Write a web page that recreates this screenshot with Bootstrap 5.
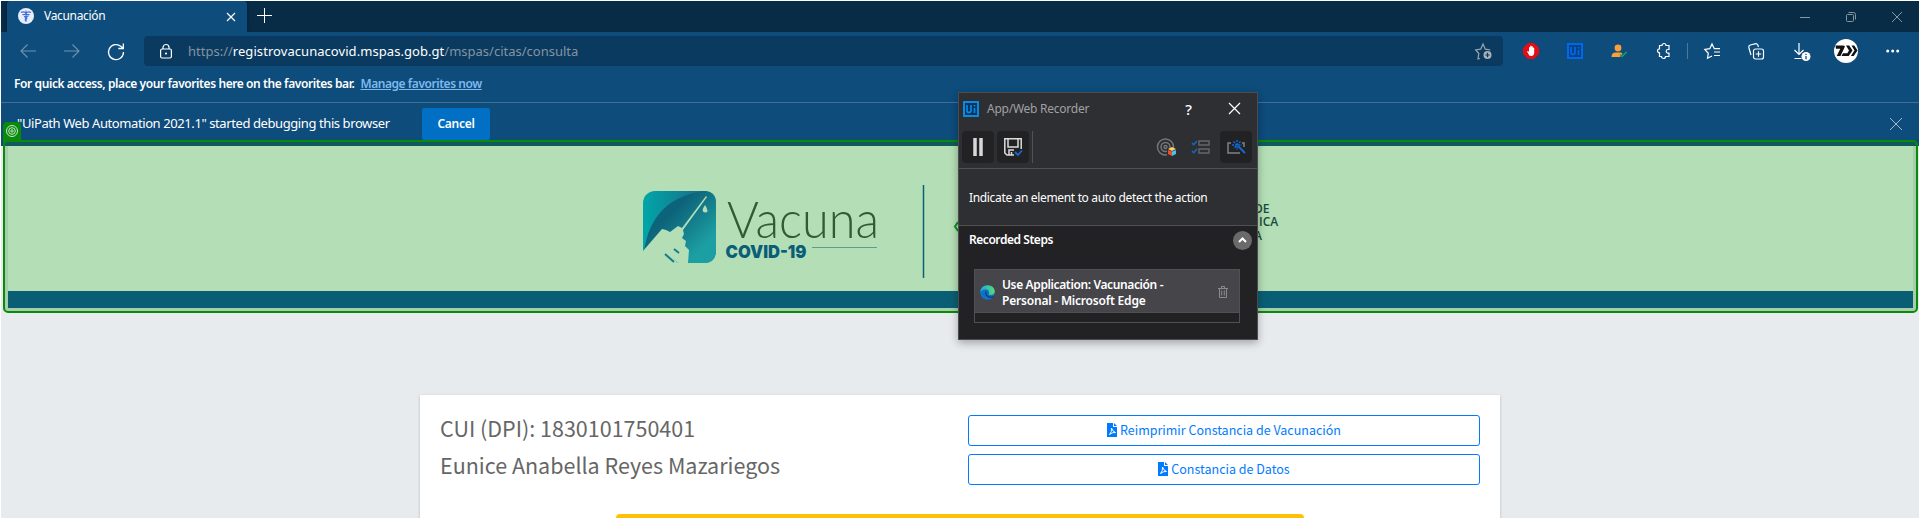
<!DOCTYPE html>
<html lang="es">
<head>
<meta charset="utf-8">
<title>Vacunación</title>
<link href="https://cdn.jsdelivr.net/npm/bootstrap@5.3.0/dist/css/bootstrap.min.css" rel="stylesheet">
<style>
body{width:1920px;height:518px;overflow:hidden;background:#fff;font-family:"Noto Sans",sans-serif;font-size:12px;line-height:16px;color:#fff}
svg{display:block;flex:none;overflow:visible}
.browser{width:1918px;height:517px;margin:1px 0 0 1px;background:#e8ebee}
.browser>*{flex-shrink:0}
.titlebar{height:31px;background:#082b46;padding-left:6px}
.tab{width:240px;height:31px;background:#0e4c7c;border-radius:3px 3px 0 0;padding:0 12px 2px 11px;box-shadow:0 0 3px #041c30}
.toolbar{height:38px;background:#0e4c7c;position:relative}
.address{width:1359px;height:30px;background:#0a3a60;border-radius:4px;font-size:13px}
.dim{color:#8494a0}
.favs{height:32px;background:#0e4c7c;padding:0 0 4px 13px;font-weight:600}
.favs a{color:#7db9ee;margin-left:6px}
.infobar{height:44px;background:#0e4c7c;border-top:1px solid #40709a;padding:5px 17px 0 16px}
.cancel{width:68px;height:32px;background:#006fc4;border:0;border-radius:2px;color:#fff;font-size:12px;font-weight:600;padding:0;line-height:30px}
.banner{height:162px;margin:0 6px 0 7px;background:#b4deb5;border-bottom:17px solid #0a5e73}
.ministry{font:600 12px/13.3px "Open Sans",sans-serif;color:#174d3e;padding-top:56px}
.record-card{width:1080px;height:130px;margin:87px auto 0;background:#fff;box-shadow:0 1px 3px rgba(0,0,0,.2);font-family:"Noto Sans CJK SC",sans-serif;color:#666;padding:20px 20px 0}
.who{font-size:21.5px;line-height:37px;margin-top:-6px}
.doc-btn{height:31px;border:1px solid #007bff;border-radius:3px;color:#007bff;font-size:12.5px;line-height:19px;padding:0 0 2px}
.notice{width:688px;height:10px;background:#ffc107;border-radius:4px 4px 0 0;margin:7px auto 0}
.highlight{left:3px;top:140px;width:1915px;height:173px;border:2px solid #088a0b;border-radius:5px;background:linear-gradient(rgba(20,120,30,.32),rgba(20,120,30,.32)) 0 0/100% 4px no-repeat}
.side-edge{top:146px;width:3px;height:165px;background:#a7cdab}
.bottom-edge{left:5px;top:308px;width:1911px;height:3px;background:#a7cdab}
.target-tab{left:3px;top:122px;width:18px;height:20px;background:#088a0b;border-radius:4px 4px 0 0}
.recorder{left:958px;top:92px;width:300px;height:248px;background:#2e2f33;border:1px solid #4b4c50;box-shadow:0 3px 8px rgba(0,0,0,.3)}
.rec-title{height:37px;padding:0 17px 0 4px}
.rec-tools{height:39px;border-bottom:1px solid #505155;padding:1px 5px 0 3px}
.tool{width:32px;height:32px;border-radius:4px;background:#222224}
.tool.plain{background:none}
.rec-hint{height:56px;padding:2px 0 0 10px}
.rec-steps{height:114px;background:#222224;border-top:1px solid #505155;padding:5px 5px 0 10px;font-weight:600}
.step-list{width:266px;height:54px;border:1px solid #505155;margin:19px 0 0 5px}
.step{height:43px;background:#45454a;border-bottom:1px solid #505155;padding:2px 11px 0 5px}
</style>
</head>
<body>
<div class="browser d-flex flex-column overflow-hidden">
  <div class="titlebar d-flex">
    <div class="tab d-flex align-items-center">
      <svg width="16" height="16" viewBox="0 0 16 16"><circle cx="8" cy="8" r="8" fill="#e6edfb"/><path d="M8 2.500v11.500M3 4.500q3-1.500 5 1 2-2.500 5-1M4.500 6.500q2 .5 3.500-.5 1.500 1 3.500.5M6 8.500q4 1 2.500 2.500-3 1 0 2M10.500 8q-4 1-3 2.500" fill="none" stroke="#3f6bd6" stroke-width="1.100"/></svg>
      <span style="margin-left:10px;padding-top:1px;letter-spacing:-.32px">Vacunación</span>
      <svg class="ms-auto" style="margin-top:2px" width="8" height="8" viewBox="0 0 8 8"><path d="M0 0L8 8M8 0L0 8" stroke="#fff" stroke-width="1.2"/></svg>
    </div>
    <svg style="margin:7px 0 0 10px" width="15" height="15"><path d="M7.500 0v15M0 7.500h15" stroke="#fff"/></svg>
    <div class="d-flex ms-auto align-items-center" style="gap:36px;padding-right:17px">
      <svg width="10" height="10"><path d="M0 5.500h10" stroke="#8796a3"/></svg>
      <svg width="10" height="10" fill="none" stroke="#8796a3"><rect x=".5" y="2.500" width="7" height="7" rx="1"/><path d="M2.500.5h5a2 2 0 0 1 2 2v5"/></svg>
      <svg width="10" height="10"><path d="M0 0L10 10M10 0L0 10" stroke="#8796a3"/></svg>
    </div>
  </div>
  <div class="toolbar d-flex align-items-center">
    <svg style="margin-left:19px" width="16" height="14" fill="none" stroke="#6f93b0" stroke-width="1.1"><path d="M16 7H1M7.500.5L1 7l6.500 6.500"/></svg>
    <svg style="margin-left:28px" width="16" height="14" fill="none" stroke="#6f93b0" stroke-width="1.100"><path d="M0 7h15M8.500.5L15 7l-6.500 6.500"/></svg>
    <svg style="margin-left:28px" width="17" height="17" fill="none" stroke="#fff" stroke-width="1.300"><path d="M15.500 9A7.500 7.500 0 1 1 13 3.500l2 1.500M15.300.5v5h-5"/></svg>
    <div class="address d-flex align-items-center" style="margin-left:19px">
      <svg style="margin-left:16px" width="12" height="15" fill="none" stroke="#fff" stroke-width="1.200"><rect x=".6" y="5" width="10.800" height="9" rx="1.500"/><path d="M3 5V3.500a3 3 0 0 1 6 0V5"/><circle cx="6" cy="9.500" r=".5"/></svg>
      <span class="dim" style="margin-left:16px;letter-spacing:0"><span>https://</span><span class="text-white" style="letter-spacing:.06px">registrovacunacovid.mspas.gob.gt</span><span>/mspas/citas/consulta</span></span>
      <svg class="ms-auto" style="margin-right:11px" width="17" height="17" fill="none" stroke="#9aa5ae" stroke-width="1.200"><path d="M5 15.500l-2 .5.800-5.500L.7 7l5-.8L8 1l2.300 5.200 5 .8"/><circle cx="12.500" cy="12" r="4" fill="#aab2b9" stroke="none"/><path d="M12.500 9.800v4.400M10.300 12h4.400" stroke="#0a3a60"/></svg>
    </div>
    <div class="d-flex align-items-center" style="padding-left:20px">
      <svg width="16" height="16"><path d="M5 0h6l5 5v6l-5 5H5l-5-5V5z" fill="#e40d13"/><path d="M4 8.500l1-.5 1 1V4.500q.7-1 1.200 0V3q.8-1 1.300 0v.6q.8-.8 1.300 0V5q.8-.8 1.400 0v5q-.3 3-3 3T5.500 11z" fill="#fff"/></svg>
      <svg style="margin-left:28px" width="16" height="16"><rect x="1" y="1" width="14" height="14" fill="#06427d" stroke="#0068ee" stroke-width="2"/><path d="M4 4v5.500q0 2 2 2t2-2V4M11.500 7v5M11.500 4v1.500" fill="none" stroke="#0068ee" stroke-width="1.700"/></svg>
      <svg style="margin-left:28px" width="16" height="14"><circle cx="7" cy="4" r="3.400" fill="#f6a13a"/><path d="M.5 13q0-4.500 4-4.500h5q1 0 2 1L9 13z" fill="#f6a13a"/><path d="M9 10.500l2 2 4.500-4.500" fill="none" stroke="#1fa35a" stroke-width="1.500"/></svg>
      <svg style="margin-left:29px" width="16" height="16" fill="none" stroke="#fff" stroke-width="1.200"><path d="M3.500 2.500h2.500a2 2 0 0 1 4 0h3v4h-1a1.800 1.800 0 0 0 0 3.600h1v3.400H9.500a2 2 0 0 1-4 0H3.500v-3.700a2 2 0 1 1 0-4z"/></svg>
      <svg style="margin-left:15px" width="1" height="16"><path d="M.5 0v16" stroke="#4d7898"/></svg>
      <svg style="margin-left:16px" width="17" height="16" fill="none" stroke="#fff" stroke-width="1.200"><path d="M8 13l-4.500 2.300.8-5L.8 6.500l5-.8L8 1l2.300 4.700H16M10 9h6M10 12.500h6"/></svg>
      <svg style="margin-left:27px" width="16" height="17" fill="none" stroke="#fff" stroke-width="1.200"><rect x="5.500" y="6" width="10" height="10" rx="2"/><path d="M10.500 8.200v5.600M7.700 11h5.600M3 12L.8 4.500Q.5 2.500 2.300 2L7 .8Q9 .4 9.800 2L10.500 4"/></svg>
      <svg style="margin:2px 0 0 30px" width="17" height="18" fill="none" stroke="#fff" stroke-width="1.200"><path d="M5 0v11M.5 7L5 11.500 9.500 7M.5 15.500h7"/><circle cx="12" cy="13.500" r="4.500" fill="#fff" stroke="none"/><path d="M12 13v3.200M12 10.700v1.200" stroke="#0e4c7c" stroke-width="1.300"/></svg>
      <svg style="margin-left:23px" width="24" height="24"><circle cx="12" cy="12" r="12" fill="#fff"/><path d="M1.500 6.500H9q2.500 0 1.500 2L6.500 17H2.700l3.600-7.300H2zM12 6.500h3.200l3.300 5-3.800 5.500H7.500l1.500-2.800h4.300l1.700-2.700zM17.500 6.500h2.800l3.200 5-3.800 5.500h-2.900l3.700-5.500z" fill="#111"/></svg>
      <svg style="margin-left:28px" width="14" height="4" fill="#fff"><circle cx="1.700" cy="2" r="1.500"/><circle cx="6.700" cy="2" r="1.500"/><circle cx="11.700" cy="2" r="1.500"/></svg>
    </div>
  </div>
  <div class="favs d-flex align-items-center"><span style="letter-spacing:-.41px">For quick access, place your favorites here on the favorites bar.</span><a href="#" style="letter-spacing:-.45px">Manage favorites now</a></div>
  <div class="infobar d-flex">
    <span style="font-size:13px;line-height:30px;width:405px;letter-spacing:-.41px">"UiPath Web Automation 2021.1" started debugging this browser</span>
    <button class="cancel" style="letter-spacing:-.3px">Cancel</button>
    <svg class="ms-auto" style="margin-top:10px" width="12" height="12"><path d="M0 0L12 12M12 0L0 12" stroke="#a8b8c5"/></svg>
  </div>
  <div class="banner d-flex">
    <svg style="margin:38px 0 0 635px" width="283" height="96" viewBox="0 0 283 96">
      <defs><linearGradient id="tile"><stop stop-color="#00a6a9"/><stop offset=".7" stop-color="#16758b"/></linearGradient><linearGradient id="leaf" x2="1" y2="1"><stop offset=".35" stop-color="#0d647a"/><stop offset=".8" stop-color="#1c9fa2"/></linearGradient></defs>
      <rect y="7" width="73" height="72" rx="12" fill="url(#tile)"/>
      <path d="M1 67Q9 14 61 7q12 0 12 12v48q0 12-12 12H31L1 67z" fill="url(#leaf)"/>
      <path d="M0 67l19-22 4 1 4 2 8-6 4 2 24-32 1 1-24 33 1 4-2 4 4 3-1 5 4 4-1 13-9 1-5-5 6 7-6 5H0z" fill="#b4deb5"/>
      <path d="M62 21q-5 7 0 7.500t0-7.500" fill="#b4deb5"/>
      <path d="M22 70l9 8M31 65l5 4" stroke="#147c8e" stroke-width="2"/>
      <text x="84" y="54" textLength="152" lengthAdjust="spacingAndGlyphs" font-family="Lato" font-weight="300" font-size="51.500" fill="#315b35">Vacuna</text>
      <text x="82.500" y="74" textLength="81" lengthAdjust="spacingAndGlyphs" font-family="Inter" font-weight="900" font-size="18" fill="#0a5e78">COVID-19</text>
      <path d="M169 63.500h65" stroke="#58a08d"/><path d="M280.500 1v93" stroke="#0a6270" stroke-width="1.500"/>
    </svg>
    <svg style="margin:76px 0 0 28px" width="5" height="9" fill="none" stroke="#148a1b" stroke-width="2"><path d="M4 0L1 4.500 4 9"/></svg>
    <div class="ministry" style="margin-left:295px"><div>DE</div><div style="padding-left:5px">ICA</div><div>A</div></div>
  </div>
  <div class="record-card">
    <div class="d-flex justify-content-between">
      <div class="who"><div>CUI (DPI): 1830101750401</div><div>Eunice Anabella Reyes Mazariegos</div></div>
      <div class="d-flex flex-column" style="width:512px;gap:8px">
        <button class="btn doc-btn d-flex justify-content-center align-items-center"><svg width="11" height="14" style="margin-right:2px"><path d="M0 0h6v4h4v10H0V0zM7 0l3 3H7z" fill="#007bff"/><path d="M4.500 5q1 3.500 4 4.500-3-.5-6 2Q5 9 4.500 5" fill="none" stroke="#fff"/></svg>Reimprimir Constancia de Vacunación</button>
        <button class="btn doc-btn d-flex justify-content-center align-items-center"><svg width="11" height="14" style="margin-right:2px"><path d="M0 0h6v4h4v10H0V0zM7 0l3 3H7z" fill="#007bff"/><path d="M4.500 5q1 3.500 4 4.500-3-.5-6 2Q5 9 4.500 5" fill="none" stroke="#fff"/></svg>Constancia de Datos</button>
      </div>
    </div>
    <div class="notice" style="margin-top:29px"></div>
  </div>
</div>

<div class="side-edge position-absolute" style="left:5px"></div>
<div class="side-edge position-absolute" style="left:1913px"></div>
<div class="bottom-edge position-absolute"></div>
<div class="highlight position-absolute"></div>
<div class="target-tab position-absolute"><svg width="18" height="18" fill="none" stroke="#c9e6c9"><circle cx="9" cy="9" r="5.500"/><circle cx="9" cy="9" r="3.300"/><circle cx="9" cy="9" r="1.200"/></svg></div>

<div class="recorder position-absolute">
  <div class="rec-title d-flex align-items-center" style="padding-bottom:6px">
    <svg width="16" height="16"><rect x="1" y="1" width="14" height="14" fill="#06345a" stroke="#078be4" stroke-width="2"/><path d="M4 4v5.500q0 2 2 2t2-2V4M11.500 7v5M11.500 4v1.500" fill="none" stroke="#078be4" stroke-width="1.700"/></svg>
    <span style="margin-left:8px;color:#a0a0a2;letter-spacing:-.25px">App/Web Recorder</span>
    <span class="ms-auto" style="font-size:15px;font-weight:500">?</span>
    <svg style="margin-left:37px" width="11" height="11"><path d="M0 0L11 11M11 0L0 11" stroke="#fff" stroke-width="1.200"/></svg>
  </div>
  <div class="rec-tools d-flex">
    <div class="tool d-flex align-items-center justify-content-center"><svg width="10" height="18"><path d="M2 0v18M8 0v18" stroke="#d8d8d8" stroke-width="3.500"/></svg></div>
    <div class="tool d-flex align-items-center justify-content-center" style="margin-left:3px"><svg width="18" height="18" fill="none" stroke="#dcdcdc" stroke-width="1.500"><path d="M10 17H3L.8 15V.8h16.400V11M4 1v8h10V1M5 17v-5h5M7.500 14v3"/><path d="M11 14l3 3 4-4.500" stroke="#1769d2" stroke-width="1.800"/></svg></div>
    <svg style="margin-left:3px" width="1" height="32"><path d="M.5 0v32" stroke="#515256"/></svg>
    <div class="tool plain ms-auto d-flex align-items-center justify-content-center"><svg width="19" height="19"><g fill="none" stroke="#77777a" stroke-width="1.400"><circle cx="8.500" cy="9" r="8"/><circle cx="8.500" cy="9" r="4.500"/><circle cx="8.500" cy="9" r="1.500"/></g><path d="M10 10h9v8h-9z" fill="#2e2f33"/><path d="M11 11l4-2 4 2-4 2z" fill="#ffd35b"/><path d="M11 12l4 1.500V18l-4-2z" fill="#ed5030"/><path d="M19 12l-4 1.500V18l4-2z" fill="#45c2ee"/></svg></div>
    <div class="tool plain d-flex align-items-center justify-content-center" style="margin-left:3px"><svg width="18" height="14" fill="none"><path d="M7 1h10v4H7zM7 9h10v4H7z" stroke="#66676a" stroke-width="1.400"/><path d="M0 3l1.700 1.700L5 1M0 11l1.700 1.700L5 9" stroke="#1268cc" stroke-width="1.500"/></svg></div>
    <div class="tool d-flex align-items-center justify-content-center" style="margin-left:3px"><svg width="19" height="14" fill="none"><path d="M4 3H1v10h12M15 3h2v4" stroke="#7d8187" stroke-width="1.500"/><path d="M10 0v10M5 5h10M6.500 1.500l7 7M13.500 1.500l-7 7" stroke="#126ad7" stroke-width="1.500" stroke-dasharray="2 1.200"/><path d="M12 7l6 6" stroke="#126ad7" stroke-width="1.800"/></svg></div>
  </div>
  <div class="rec-hint d-flex align-items-center"><span style="letter-spacing:-.34px">Indicate an element to auto detect the action</span></div>
  <div class="rec-steps">
    <div class="d-flex justify-content-between"><span style="line-height:18px;letter-spacing:-.45px">Recorded Steps</span><svg width="19" height="19"><circle cx="9.500" cy="9.500" r="9.500" fill="#6a6a6b"/><path d="M6 11l3.500-3.500L13 11" fill="none" stroke="#fff" stroke-width="2"/></svg></div>
    <div class="step-list">
      <div class="step d-flex align-items-center">
        <svg width="15" height="15" viewBox="0 0 15 15"><defs><linearGradient id="edge"><stop stop-color="#1fa7de"/><stop offset="1" stop-color="#5bdb72"/></linearGradient></defs><circle cx="7.500" cy="7.500" r="7.300" fill="#0d75c9"/><path d="M.2 7Q1 .2 7.500.2q6.500 0 7.300 6Q14.500 10 10 10q-1 0-1-1 1-3.500-2-4.500Q3 3.500.2 7" fill="url(#edge)"/><path d="M6 6.500q-1 4 3 5.500 2 .7 4.500-.5" fill="none" stroke="#173e78" stroke-width="1.500"/></svg>
        <span style="margin-left:7px;padding-top:2px;letter-spacing:-.37px">Use Application: Vacunación -<br><span style="letter-spacing:-.2px">Personal - Microsoft Edge</span></span>
        <svg class="ms-auto" width="10" height="12" fill="none" stroke="#8b8b8e"><path d="M0 2.500h10M3.500 2V.5h3V2M1.500 3v8.500h7V3M3.700 4.500v5M6.300 4.500v5"/></svg>
      </div>
    </div>
  </div>
</div>
<script src="https://cdn.jsdelivr.net/npm/bootstrap@5.3.0/dist/js/bootstrap.bundle.min.js"></script>
</body>
</html>
